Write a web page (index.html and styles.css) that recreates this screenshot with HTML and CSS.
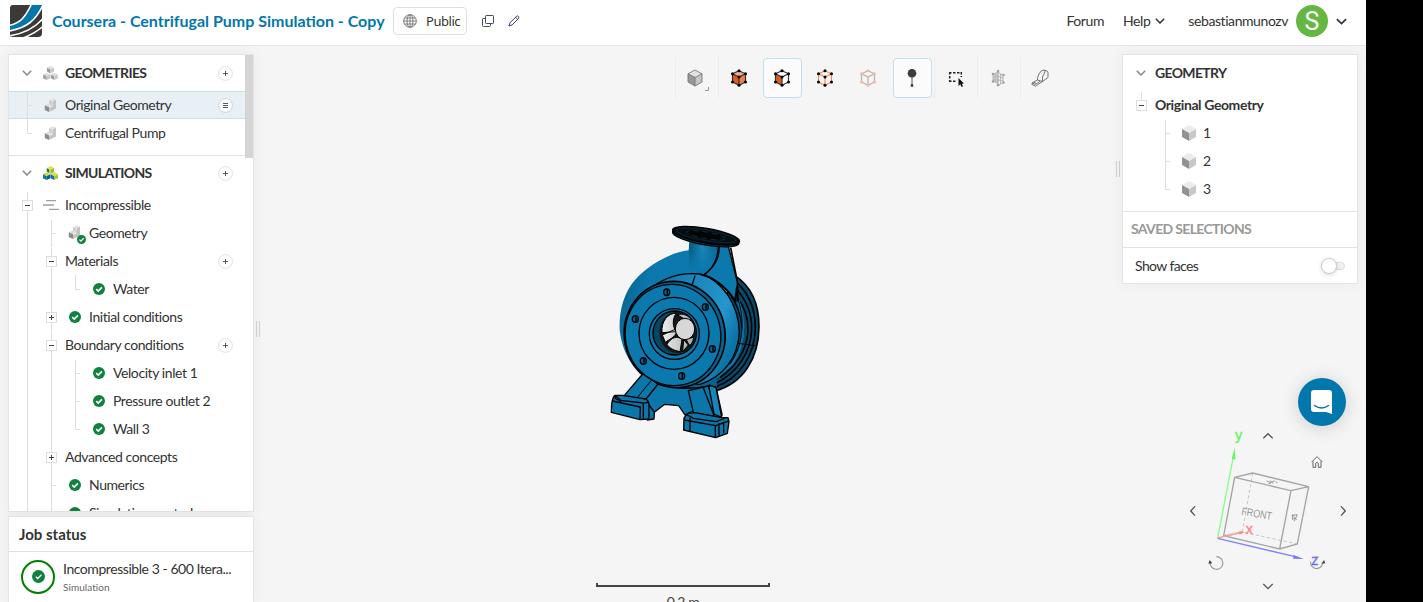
FILE: index.html
```html
<!DOCTYPE html>
<html lang="en">
<head>
<meta charset="utf-8">
<title>Centrifugal Pump Simulation</title>
<link rel="stylesheet" href="styles.css">
</head>
<body>
<svg class="defs" width="0" height="0">
  <defs>
    <symbol id="g-line" viewBox="0 0 24 28"><path d="M12.5 0V28" class="gl"/></symbol>
    <symbol id="g-tee" viewBox="0 0 24 28"><path d="M12.5 0V28M13 14.500H17" class="gl"/></symbol>
    <symbol id="g-end" viewBox="0 0 24 28"><path d="M12.5 0V14.500H17" class="gl"/></symbol>
    <symbol id="g-tee1" viewBox="0 0 24 28"><path d="M12.5 1V28M13 14.500H17" class="gl"/></symbol>
    <symbol id="g-minus" viewBox="0 0 24 28"><path d="M12.500 1V28" class="gl"/><rect x="7.500" y="9.500" width="10" height="10" class="gb"/><path d="M10 14.500H15" class="gs"/></symbol>
    <symbol id="g-minus-end" viewBox="0 0 24 28"><path d="M12.500 1V9" class="gl"/><rect x="7.500" y="9.500" width="10" height="10" class="gb"/><path d="M10 14.500H15" class="gs"/></symbol>
    <symbol id="g-plus" viewBox="0 0 24 28"><path d="M12.500 0V28" class="gl"/><rect x="7.500" y="9.500" width="10" height="10" class="gb"/><path d="M10 14.500H15M12.500 12V17" class="gs"/></symbol>
    <symbol id="chev" viewBox="0 0 10 6"><path d="M.8.8 5 5 9.200.8" fill="none" stroke="currentColor" stroke-width="1.500"/></symbol>
    <symbol id="check" viewBox="0 0 12 12"><circle cx="6" cy="6" r="6" fill="#11813f"/><path d="M3.200 6.200 5.200 8.100 8.900 4.300" fill="none" stroke="#fff" stroke-width="1.700"/></symbol>
    <symbol id="cube" viewBox="0 0 14 16"><path d="M7 0 14 4 7 8 0 4Z" fill="#ebebeb"/><path d="M0 4 7 8V16L0 12Z" fill="#939391"/><path d="M14 4 7 8V16L14 12Z" fill="#c8c8ca"/></symbol>
    <symbol id="part" viewBox="0 0 14 14"><path d="M5 2 8.500 .2 12 1.600 8.500 3.400Z" fill="#e4e4e4"/><path d="M8.500 3.400 12 1.600V10.500L5 14V10L8.500 8.200Z" fill="#c4c4c4"/><path d="M5 2 8.500 3.400V8.200L5 7Z" fill="#cfcfcf"/><path d="M.8 7.200 4.500 5.500 8.500 7.200 5 9.200Z" fill="#dedede"/><path d="M.8 7.200 5 9.200V14L.8 12Z" fill="#8c8c8c"/></symbol>
    <symbol id="cubes-grey" viewBox="0 0 15 14"><path d="M7.500 0 11 1.800 7.500 3.600 4 1.800Z" fill="#dcdcdc"/><path d="M4 1.800 7.500 3.600V7.400L4 5.600Z" fill="#9c9c9c"/><path d="M11 1.800 7.500 3.600V7.400L11 5.600Z" fill="#c8c8c8"/><path d="M3.700 6.800 7.200 8.600 3.700 10.400.2 8.600ZM11.300 6.800 14.800 8.600 11.300 10.400 7.800 8.600Z" fill="#dcdcdc"/><path d="M.2 8.600 3.700 10.400V14L.2 12.200ZM7.800 8.600 11.300 10.400V14L7.800 12.200Z" fill="#9c9c9c"/><path d="M7.200 8.600 3.700 10.400V14L7.200 12.200ZM14.800 8.600 11.300 10.400V14L14.800 12.200Z" fill="#c6c6c6"/></symbol>
    <symbol id="cubes-color" viewBox="0 0 15 14"><path d="M7.500 0 11.200 1.900 7.500 3.800 3.800 1.900Z" fill="#e8e23c"/><path d="M3.800 1.900 7.500 3.800V8L3.800 6Z" fill="#c8cc38"/><path d="M11.200 1.900 7.500 3.800V8L11.200 6Z" fill="#a0bd3c"/><path d="M3.700 6.300 7.400 8.300 3.700 10.200 0 8.300Z" fill="#c9d845"/><path d="M11.300 6.300 15 8.300 11.300 10.200 7.600 8.300Z" fill="#e4dc3c"/><path d="M0 8.300 3.700 10.200V14L0 12.200ZM7.600 8.300 11.300 10.200V14L7.600 12.200ZM3.800 2.200 6 3.500V6.600L3.800 5.600Z" fill="#0a72ad"/><path d="M7.400 8.300 3.700 10.200V14L7.400 12.200Z" fill="#07608e"/><path d="M15 8.300 11.300 10.200V14L15 12.200Z" fill="#a3c43a"/></symbol>
    <symbol id="add" viewBox="0 0 15 15"><circle cx="7.500" cy="7.500" r="6.900" fill="#fff" stroke="#dde2e7"/><path d="M5 7.500H10M7.500 5V10" stroke="#555b60"/></symbol>
    <symbol id="menu" viewBox="0 0 15 15"><circle cx="7.500" cy="7.500" r="6.900" fill="#fff" stroke="#ccd3d9"/><path d="M5 5.500H10M5 7.500H10M5 9.500H10" stroke="#555b60"/></symbol>
    <symbol id="vdots" viewBox="0 0 18 18"><g><circle cx="9" cy="1.700" r="1.500"/><circle cx="2.500" cy="4.800" r="1.500"/><circle cx="15.500" cy="4.800" r="1.500"/><circle cx="9" cy="8" r="1.500"/><circle cx="2.500" cy="13" r="1.500"/><circle cx="15.500" cy="13" r="1.500"/><circle cx="9" cy="16.300" r="1.500"/></g></symbol>
  </defs>
</svg>
<div class="app">
  <header class="topbar">
    <svg class="logo" viewBox="0 0 32 32"><clipPath id="lc"><path d="M3 0H32V28Q32 32 28 32H0V3Q0 0 3 0Z"/></clipPath><g clip-path="url(#lc)"><rect width="32" height="32" fill="#3d3936"/><path d="M-1 21C11 18 15 14 22-1H33V1C27 15 17 23-1 26Z" fill="#0277ab"/><path d="M-1 20.500C10 18 15 13 21.500-1M-1 26C17 23 26 15 33 0M-1 31C15 28.500 25 23 33 13.500M13 33C20 30.500 27 26.500 33 21.500" fill="none" stroke="#fff" stroke-width="1.600"/></g></svg>
    <h1 class="title">Coursera - Centrifugal Pump Simulation - Copy</h1>
    <button class="public"><svg width="14" height="14" viewBox="0 0 14 14" fill="none" stroke="#777"><circle cx="7" cy="7" r="6.300"/><ellipse cx="7" cy="7" rx="3" ry="6.300"/><path d="M7 .7V13.300M.7 7H13.300M1.500 4H12.500M1.500 10H12.500" stroke-width=".9"/></svg><span>Public</span></button>
    <svg class="copy" width="12" height="12" viewBox="0 0 12 12" fill="none" stroke="#444e60"><rect x="3.500" y=".5" width="8" height="8" rx=".7"/><path d="M3 3.500H1.200Q.5 3.500.5 4.200V10.500Q.5 11.500 1.500 11.500H7.500Q8.500 11.500 8.500 10.500V9"/></svg>
    <svg class="edit" width="12" height="12" viewBox="0 0 12 12" fill="none" stroke="#34406a"><path d="M1 11 2 7.800 8.600 1.200Q9.500.5 10.400 1.400T10.700 3.300L4.100 9.900ZM7.500 2.300 9.700 4.400"/></svg>
    <nav class="nav">
      <a class="forum">Forum</a><a class="help">Help</a><svg class="c1" width="10" height="6"><use href="#chev"/></svg>
      <a class="user">sebastianmunozv</a><span class="avatar">S</span><svg class="c2" width="11" height="7"><use href="#chev"/></svg>
    </nav>
  </header>
  <main class="work">
    <aside class="left">
      <section class="panel treepanel">
        <div class="tree">
          <div class="head"><svg class="chv"><use href="#chev"/></svg><svg class="hi"><use href="#cubes-grey"/></svg><b>GEOMETRIES</b><svg class="act"><use href="#add"/></svg></div>
          <div class="row sel"><svg class="g"><use href="#g-tee"/></svg><span class="ic"><svg class="pt"><use href="#part"/></svg></span><span class="tx">Original Geometry</span><svg class="act"><use href="#menu"/></svg></div>
          <div class="row"><svg class="g"><use href="#g-end"/></svg><span class="ic"><svg class="pt"><use href="#part"/></svg></span><span class="tx">Centrifugal Pump</span></div>
          <div class="head second"><svg class="chv"><use href="#chev"/></svg><svg class="hi"><use href="#cubes-color"/></svg><b>SIMULATIONS</b><svg class="act"><use href="#add"/></svg></div>
          <div class="row"><svg class="g"><use href="#g-minus"/></svg><span class="ic"><svg width="16" height="10" viewBox="0 0 16 10"><path d="M3 .7H13M0 5H11M6 9.300H16" stroke="#a0a0a0" stroke-width="1.300"/></svg></span><span class="tx">Incompressible</span></div>
          <div class="row"><svg class="g"><use href="#g-line"/></svg><svg class="g"><use href="#g-tee1"/></svg><span class="ic"><svg class="ptc" viewBox="0 0 19 20"><use href="#part" x="1" y="0" width="14" height="14"/><use href="#check" x="10" y="10" width="9" height="9"/></svg></span><span class="tx">Geometry</span></div>
          <div class="row"><svg class="g"><use href="#g-line"/></svg><svg class="g"><use href="#g-minus"/></svg><span class="tx">Materials</span><svg class="act"><use href="#add"/></svg></div>
          <div class="row"><svg class="g"><use href="#g-line"/></svg><svg class="g"><use href="#g-line"/></svg><svg class="g"><use href="#g-end"/></svg><span class="ic"><svg class="ck"><use href="#check"/></svg></span><span class="tx">Water</span></div>
          <div class="row"><svg class="g"><use href="#g-line"/></svg><svg class="g"><use href="#g-plus"/></svg><span class="ic"><svg class="ck"><use href="#check"/></svg></span><span class="tx">Initial conditions</span></div>
          <div class="row"><svg class="g"><use href="#g-line"/></svg><svg class="g"><use href="#g-minus"/></svg><span class="tx">Boundary conditions</span><svg class="act"><use href="#add"/></svg></div>
          <div class="row"><svg class="g"><use href="#g-line"/></svg><svg class="g"><use href="#g-line"/></svg><svg class="g"><use href="#g-tee1"/></svg><span class="ic"><svg class="ck"><use href="#check"/></svg></span><span class="tx">Velocity inlet 1</span></div>
          <div class="row"><svg class="g"><use href="#g-line"/></svg><svg class="g"><use href="#g-line"/></svg><svg class="g"><use href="#g-tee"/></svg><span class="ic"><svg class="ck"><use href="#check"/></svg></span><span class="tx">Pressure outlet 2</span></div>
          <div class="row"><svg class="g"><use href="#g-line"/></svg><svg class="g"><use href="#g-line"/></svg><svg class="g"><use href="#g-end"/></svg><span class="ic"><svg class="ck"><use href="#check"/></svg></span><span class="tx">Wall 3</span></div>
          <div class="row"><svg class="g"><use href="#g-line"/></svg><svg class="g"><use href="#g-plus"/></svg><span class="tx">Advanced concepts</span></div>
          <div class="row"><svg class="g"><use href="#g-line"/></svg><svg class="g"><use href="#g-tee"/></svg><span class="ic"><svg class="ck"><use href="#check"/></svg></span><span class="tx">Numerics</span></div>
          <div class="row"><svg class="g"><use href="#g-line"/></svg><svg class="g"><use href="#g-tee"/></svg><span class="ic"><svg class="ck"><use href="#check"/></svg></span><span class="tx">Simulation control</span></div>
        </div>
        <div class="scroll"></div>
      </section>
      <section class="panel jobs">
        <h2>Job status</h2>
        <div class="job">
          <svg width="34" height="34" viewBox="0 0 34 34"><circle cx="17" cy="17" r="16" fill="none" stroke="#008000" stroke-width="2"/><circle cx="17.500" cy="16.500" r="6.500" fill="#11813f"/><path d="M14.800 16.800 16.700 18.500 20.400 14.800" fill="none" stroke="#fff" stroke-width="1.300"/></svg>
          <div><p class="jn">Incompressible 3 - 600 Itera...</p><p class="jt">Simulation</p></div>
        </div>
      </section>
    </aside>
    <i class="grip gripl"></i>
    <div class="center">
      <div class="tools">
        <span class="t sep"><svg class="first" width="34" height="28" viewBox="0 0 34 28"><path d="M12 5 19 8.800 12 12.500 5 8.800Z" fill="#e2e2e2"/><path d="M5 8.800 12 12.500V21L5 17Z" fill="#989898"/><path d="M19 8.800 12 12.500V21L19 17Z" fill="#c5c5c5"/><path d="M12 5 19 8.800V17L12 21 5 17V8.800ZM5 8.800 12 12.500 19 8.800M12 12.500V21" fill="none" stroke="#777" stroke-width=".9"/><path d="M25.500 22V25.500H22" fill="none" stroke="#999"/></svg></span>
        <span class="t sep"><svg class="tc lf" viewBox="0 0 18 18"><path d="M9 1.700 15.500 4.800 9 8 2.500 4.800Z" fill="#f0ad8f"/><path d="M2.500 4.800 9 8V16.300L2.500 13Z" fill="#dc5b1e"/><path d="M15.500 4.800 9 8V16.300L15.500 13Z" fill="#ee7f4b"/><path class="ol" stroke="#333" d="M9 1.700 15.500 4.800V13L9 16.300 2.500 13V4.800ZM2.500 4.800 9 8 15.500 4.800M9 8V16.300"/><use href="#vdots"/></svg></span>
        <span class="t"><span class="on"><svg class="tc lf" viewBox="0 0 18 18"><path d="M9 1.700 15.500 4.800V13L9 16.300 2.500 13V4.800Z" fill="#fff"/><path d="M2.500 4.800 9 8V16.300L2.500 13Z" fill="#df5a1c"/><path class="ol" stroke="#333" d="M9 1.700 15.500 4.800V13L9 16.300 2.500 13V4.800ZM2.500 4.800 9 8 15.500 4.800M9 8V16.300"/><use href="#vdots"/></svg></span></span>
        <span class="t"><svg class="tc lf" viewBox="0 0 18 18"><path class="ol" stroke="#ed875c" d="M9 1.700 15.500 4.800V13L9 16.300 2.500 13V4.800ZM2.500 4.800 9 8 15.500 4.800M9 8V16.300"/><use href="#vdots"/></svg></span>
        <span class="t"><svg class="tc lf" viewBox="0 0 18 18" fill="#f4b9a2"><path class="ol" stroke="#b5b0ae" d="M9 1.700 15.500 4.800V13L9 16.300 2.500 13V4.800ZM2.500 4.800 9 8 15.500 4.800M9 8V16.300"/><use href="#vdots"/></svg></span>
        <span class="t"><span class="on"><svg class="tc" viewBox="0 0 18 18"><circle cx="9" cy="4.200" r="4.300" fill="#3c3c3c"/><path d="M9 8V16" stroke="#555"/><circle cx="9" cy="16.500" r="1.400" fill="#444"/></svg></span></span>
        <span class="t sep"><svg class="tc" viewBox="0 0 18 18"><path d="M2 3.700H15M2 12.300H10M2.700 3V13M14.300 3V8" fill="none" stroke="#222" stroke-width="1.500" stroke-dasharray="2.500 1.500"/><path d="M11.500 9V17L13.300 15.300 14.500 18 16 17.300 14.800 14.800 17 14.500Z" fill="#111"/></svg></span>
        <span class="t sep"><svg class="tc lf" viewBox="0 0 18 18" fill="none" stroke="#b4b4b4"><path d="M4 5.500 9 3V14.500L4 12Z" fill="#d4d4d4"/><path d="M9 3 14 6.500V13.500L9 16.500ZM4 8.500 9 7 14 9M4 11 9 11 14 11.500M6.500 4V13M11.500 5V15"/><g fill="#a2a2a2" stroke="none"><circle cx="9" cy="2" r="1.300"/><circle cx="4" cy="5" r="1.300"/><circle cx="14.500" cy="6" r="1.300"/><circle cx="9" cy="16.300" r="1.300"/><circle cx="4" cy="12.500" r="1.300"/><circle cx="14.500" cy="13.500" r="1.300"/></g></svg></span>
        <span class="t sep"><svg class="tc tape" viewBox="0 0 18 18" fill="none" stroke="#666"><path d="M6.500 8.500 8 5Q10 1 13 1L16 2Q17 2.500 17 4V8.500L11.500 12.500 6.500 11ZM13 1Q15 2.500 13 5L11.500 8V12.500M6.500 11 1 14V15.500L4.500 17 11.500 12.500M1 14 4.500 15.300 9 12.300M3 13.200 5 14.500" stroke-width=".9"/></svg></span>
      </div>
      <svg class="pump" width="170" height="230" viewBox="0 0 510 690">
        <defs>
          <linearGradient id="pv" x1="0" y1="0" x2="1" y2=".35"><stop offset="0" stop-color="#085579"/><stop offset=".3" stop-color="#0b79ae"/><stop offset="1" stop-color="#0b79ae"/></linearGradient>
          <linearGradient id="pn" x1="0" x2="1"><stop offset="0" stop-color="#07547a"/><stop offset=".45" stop-color="#1b86ba"/><stop offset="1" stop-color="#075f89"/></linearGradient>
          <linearGradient id="pf" x1="0" x2="0" y1="0" y2="1"><stop offset=".2" stop-color="#fff"/><stop offset="1" stop-color="#000"/></linearGradient>
          <mask id="pm"><rect x="255" y="75" width="110" height="90" fill="url(#pf)"/></mask>
          <linearGradient id="pb" x1="0" x2="1" y1="0" y2=".5"><stop offset="0" stop-color="#0a71a3"/><stop offset=".8" stop-color="#2596cd"/><stop offset="1" stop-color="#0b73a6"/></linearGradient>
          <linearGradient id="pw" x1="0" x2="1"><stop offset="0" stop-color="#eee"/><stop offset="1" stop-color="#aaa"/></linearGradient>
        </defs>
        <g stroke="#000" stroke-width="4" stroke-linejoin="round">
          <path d="M405 182C455 215 477 270 477 335C476 430 430 505 345 528L290 440Z" fill="#064b6b" stroke-width="5"/>
          <path d="M402 195C445 230 466 280 466 340C464 420 420 490 345 516M408 222C440 255 456 295 455 345C452 410 415 470 350 504M411 247C434 275 445 310 444 350C440 405 408 455 360 488" fill="none" stroke-width="5"/>
          <path d="M414 255C440 330 430 400 394 448L350 486" fill="none" stroke="#0b78ac" stroke-width="8"/>
          <path d="M413 250C437 320 428 395 390 447M414 385 466 392" fill="none" stroke-width="3"/>
          <path d="M170 470H350V518L270 530 180 515Z" fill="#07628f" stroke="none"/>
        </g>
        <path d="M268 82 266 106C215 112 150 145 105 195C70 235 57 290 59 345C66 410 98 465 145 492L290 510C370 490 425 410 417 325C410 270 370 210 315 178C345 155 357 130 357 92Z" fill="url(#pv)"/>
        <path d="M268 82 266 165H310C350 150 357 125 357 92Z" fill="url(#pn)" mask="url(#pm)"/>
        <path d="M358 90 385 94 413 205 407 257C380 216 350 193 313 179C350 150 358 125 358 90Z" fill="#0b79ae" stroke="#000" stroke-width="4"/>
        <path d="M130 238C180 190 235 170 300 177C370 195 416 275 418 350C414 430 370 485 300 508L190 500Z" fill="url(#pb)" stroke="#000" stroke-width="4"/>
        <path d="M302 178C370 195 421 260 426 340M285 182 277 208M356 92C352 135 340 160 313 178M410 215 404 260" fill="none" stroke="#000" stroke-width="4"/>
        <path d="M392 98 413 205V260" fill="none" stroke="#000" stroke-width="5"/>
        <ellipse cx="224" cy="359" rx="151" ry="160" fill="#07628f" stroke="#000" stroke-width="5" transform="rotate(-12 224 359)"/>
        <ellipse cx="219" cy="360" rx="143" ry="152" fill="#0b79ad" stroke="#000" stroke-width="4" transform="rotate(-12 219 360)"/>
        <ellipse cx="222" cy="355" rx="105" ry="108" fill="none" stroke="#000" stroke-width="4"/>
        <ellipse cx="223" cy="357" rx="75" ry="76" fill="#0b79ad" stroke="#000" stroke-width="4"/>
        <ellipse cx="224" cy="354" rx="65" ry="66" fill="#064766" stroke="#000" stroke-width="4"/>
        <ellipse cx="232" cy="352" rx="54" ry="62" fill="#171717"/>
        <path d="M186 353C183 318 204 295 229 294 215 315 219 335 228 350ZM187 360 232 340C230 366 212 370 196 382ZM201 388C213 368 232 360 246 374L240 410C221 406 207 399 201 388ZM251 374 265 390 248 410ZM258 372 281 367C280 381 271 392 267 390ZM232 299C248 295 266 300 275 316L250 310Z" fill="url(#pw)" stroke="#000" stroke-width="3"/>
        <ellipse cx="255" cy="342" rx="29" ry="32" fill="#d7d7d7" stroke="#000" stroke-width="3"/>
        <g fill="#07628f" stroke="#000" stroke-width="4"><ellipse cx="200" cy="232" rx="9" ry="10"/><ellipse cx="316" cy="276" rx="9" ry="10"/><ellipse cx="106" cy="312" rx="9" ry="10"/><ellipse cx="337" cy="402" rx="9" ry="10"/><ellipse cx="130" cy="438" rx="9" ry="10"/><ellipse cx="245" cy="483" rx="9" ry="10"/></g>
        <path d="M202 223V241M318 268V284M108 303V321M339 393V411M132 429V447M247 474V492" stroke="#000" stroke-width="4"/>
        <g fill="#0b76a9" stroke="#000" stroke-width="4" stroke-linejoin="round">
          <path d="M174 507C210 520 260 524 320 514L338 560 255 600 236 572 194 568 163 592 162 612 142 615 138 550Z"/>
          <path d="M128 477 70 545 130 562 174 507Z"/><path d="M155 495 110 550" fill="none" stroke-width="3"/>
          <path d="M45 541 68 541 137 552Q146 556 147 568V612L120 614 34 592 35 568Q38 546 45 541Z"/>
          <path d="M45 543Q43 554 62 556L130 564 145 562M37 558 121 576 120 613M48 544 62 556 60 563M130 564V611M147 570 164 592" fill="none"/>
          <path d="M265 527 280 592 360 608 325 513Z"/><path d="M310 518 343 604M327 510 348 517 367 602" fill="none" stroke-width="4"/>
          <path d="M348 517 326 511 342 597 365 607Z" fill="#1486bc"/>
          <path d="M263 595 284 593 365 608 384 608 387 620 382 655 347 668 251 645 252 609Z"/>
          <path d="M253 615 347 632 386 618M346 632V667M261 599 280 610 348 620 376 609M270 608V648M357 624V662M371 620V655" fill="none"/>
        </g>
        <g transform="rotate(10 318 63)" stroke="#000">
          <ellipse cx="318" cy="68" rx="101" ry="22" fill="#063c56" stroke-width="4"/>
          <ellipse cx="318" cy="62" rx="102" ry="22" fill="#080d11" stroke-width="4"/>
          <ellipse cx="318" cy="61" rx="90" ry="16" fill="none" stroke="#052839" stroke-width="3"/>
          <ellipse cx="318" cy="61" rx="58" ry="10" fill="#020506" stroke="#06405c" stroke-width="2" stroke-dasharray="16 12"/>
        </g>
      </svg>
      <div class="scale"><div class="bar"></div><span>0.2 m</span></div>
    </div>
    <i class="grip gripr"></i>
    <aside class="right">
      <section class="panel geo">
        <div class="head"><svg class="chv"><use href="#chev"/></svg><b class="nb">GEOMETRY</b></div>
        <div class="row"><svg class="g"><use href="#g-minus-end"/></svg><b class="tx nb">Original Geometry</b></div>
        <div class="row kid"><svg class="g"><use href="#g-tee1"/></svg><svg class="cb"><use href="#cube"/></svg><span>1</span></div>
        <div class="row kid"><svg class="g"><use href="#g-tee"/></svg><svg class="cb"><use href="#cube"/></svg><span>2</span></div>
        <div class="row kid"><svg class="g"><use href="#g-end"/></svg><svg class="cb"><use href="#cube"/></svg><span>3</span></div>
        <div class="saved">SAVED SELECTIONS</div>
        <div class="faces"><span>Show faces</span><span class="toggle"><i class="knob"></i></span></div>
      </section>
    </aside>
    <svg class="orient" width="190" height="182" viewBox="0 150 570 546" fill="none">
      <g stroke="#555" stroke-width="4"><path d="M250 205 264 191 278 205M250 642 264 656 278 642M45 409 32 423 45 437M483 409 496 423 483 437"/></g>
      <path d="M395 276 411 260 427 276M399 274V292H407V280Q411 274 415 280V292H423V274" stroke="#666" stroke-width="3"/>
      <path d="M218 309 187 486 352 522M131 498 187 486" stroke="#c6c6c6" stroke-width="3" stroke-dasharray="10 7"/>
      <path d="M131 497 187 486" stroke="#aaa" stroke-width="6" stroke-dasharray="2 3"/>
      <path d="M164 322 333 362 299 537 131 497ZM164 322 218 309 386 350 333 362M386 350 352 522 299 537" stroke="#a4a4a4" stroke-width="4"/>
      <path d="M113 504 162 250" stroke="#86ff86" stroke-width="4"/><path d="M165 232 155 267 166 269Z" fill="#66f566"/>
      <path d="M113 504 185 488" stroke="#ff9c9c" stroke-width="4"/><path d="M193 486 177 484 179 494Z" fill="#ff8585"/>
      <path d="M113 505 345 560" stroke="#8080ff" stroke-width="4"/><path d="M371 567 339 566 341 555Z" fill="#7777ff"/>
      <g class="axes"><text x="165" y="210" fill="#5cf45c" stroke="#5cf45c">y</text><text x="197" y="491" fill="#ff8585" stroke="#ff8585">x</text><text x="394" y="586" fill="#6b6bf8" stroke="#6b6bf8">z</text></g>
      <text class="front" textLength="92" lengthAdjust="spacingAndGlyphs" transform="matrix(.985 .17 -.17 .985 183 434)">FRONT</text>
      <path d="M260 333 272 338 284 332M266 340H273M287 335 293 338M270 332 280 340M335 437 352 434 342 454M339 432 337 448 349 444M340 440 350 449" stroke="#999" stroke-width="3"/>
      <path d="M91 575A19 19 0 1 0 109 560M392 575A18 18 0 1 0 428 580M405 561H417" stroke="#999" stroke-width="3.500"/>
      <path d="M85 581 89 570 97 580ZM424 581 432 570 436 580Z" fill="#444"/>
    </svg>
    <button class="chat"><svg width="24" height="26" viewBox="0 0 24 26"><path d="M4 1H19Q22 1 22 4V25L16 23H4Q1 23 1 20V4Q1 1 4 1Z" fill="#fff"/><path d="M4.500 16.500Q11.500 21.500 18.500 16.500" fill="none" stroke="#0277ab" stroke-width="1.400" stroke-linecap="round"/></svg></button>
  </main>
</div>
</body>
</html>
```

FILE: styles.css
```css
* { box-sizing: border-box; }
body { margin: 0; background: #000; overflow: hidden; font: 14px/20px Lato, sans-serif; letter-spacing: -.42px; color: #333; }
h1, h2, p { margin: 0; }
button { font: inherit; color: inherit; padding: 0; border: 0; }
svg { display: block; flex: none; }
.defs { position: absolute; }
.app { width: 1366px; height: 602px; background: #f5f5f5; display: flex; flex-direction: column; overflow: hidden; }
.topbar { height: 46px; flex: none; background: #fff; border-bottom: 1px solid #e2e2e2; display: flex; align-items: center; padding: 0 19px 3px 10px; }
.logo { width: 32px; height: 32px; }
.title { margin-left: 10px; width: 333px; font-size: 16px; line-height: 22px; font-weight: 700; letter-spacing: 0; color: #0277ab; white-space: nowrap; }
.public { margin-left: 8px; width: 74px; height: 28px; border: 1px solid #dfdfdf; border-radius: 4px; background: #fff; display: flex; align-items: center; gap: 9px; padding-left: 9px; font: 13px "Noto Sans", sans-serif; letter-spacing: -.45px; }
.copy { margin-left: 15px; }
.edit { margin-left: 14px; }
.nav { margin-left: auto; display: flex; align-items: center; }
.help { margin-left: 19px; }
.c1 { margin-left: 5px; }
.user { margin-left: 23px; }
.avatar { margin-left: 8px; width: 32px; height: 32px; border-radius: 50%; background: #64b842; color: #fff; font: 25px/33px Roboto, sans-serif; letter-spacing: 0; text-align: center; }
.c2 { margin-left: 8px; }

.work { position: relative; flex: 1; min-height: 0; display: flex; padding: 8px 8px 0; }
.left { width: 246px; display: flex; flex-direction: column; gap: 4px; }
.panel { background: #fff; border: 1px solid #e4e4e4; box-shadow: 0 0 14px rgba(0, 0, 0, .05); }
.treepanel { height: 458px; display: flex; overflow: hidden; flex: none; }
.tree { width: 236px; flex: none; }
.scroll { width: 8px; height: 103px; background: #d5d5d5; }
.head { height: 36px; display: flex; align-items: center; padding-left: 13px; }
.head b, .nb { font-weight: 700; }
.head b { letter-spacing: -.65px; }
.chv { width: 10px; height: 6px; color: #888; }
.hi { width: 15px; height: 14px; margin: 0 7px 0 11px; }
.second { border-top: 1px solid #e2e2e2; margin-top: 8px; height: 36px; padding-bottom: 2px; }
.row { height: 28px; display: flex; align-items: center; padding-left: 6px; white-space: nowrap; }
.sel { background: #e8f0f5; box-shadow: inset 0 1px #c9e0e8, inset 0 -1px #c9e0e8; }
.g { width: 24px; height: 28px; }
.gl { fill: none; stroke: #dcdfe1; shape-rendering: crispEdges; }
.gb { fill: #fff; stroke: #dedede; shape-rendering: crispEdges; }
.gs { stroke: #444; shape-rendering: crispEdges; }
.ic { width: 24px; flex: none; display: flex; justify-content: center; }
.pt { width: 14px; height: 14px; }
.ptc { width: 19px; height: 20px; margin: 4px 0 0 3px; }
.ck { width: 12px; height: 12px; }
.tx { margin-left: 2px; }
.act { width: 15px; height: 15px; margin: 1px 12px 0 auto; }
.jobs { flex: 1; border-bottom: 0; }
.jobs h2 { height: 35px; padding: 0 10px; font-size: 15px; letter-spacing: 0; line-height: 35px; border-bottom: 1px solid #e2e2e2; }
.job { display: flex; padding: 8px 0 0 12px; gap: 8px; }
.jn { line-height: 20px; margin-top: -1px; letter-spacing: -.44px; }
.jt { font-size: 10px; letter-spacing: .05px; line-height: 16px; color: #666; }
.grip { width: 4px; height: 16px; border: solid #cfcfcf; border-width: 0 1px; flex: none; }
.gripl { margin: 267px 0 0 2px; }
.gripr { margin: 107px 2px 0 0; }

.center { flex: 1; min-width: 0; position: relative; display: flex; flex-direction: column; padding: 3px 0 0 415px; }
.tools { display: grid; grid-template-columns: 43px 43px 43px 43px 43px 44px 43px 43px 44px; height: 41px; }
.t { display: flex; align-items: center; justify-content: center; }
.sep { border-left: 1px solid #ececec; }
.tc { width: 18px; height: 18px; }
.lf { margin-right: 2px; }
.tape { margin-right: 5px; }
.ol { fill: none; stroke-width: 1.200; }
.on { width: 39px; height: 40px; border: 1px solid #bfe0ee; border-radius: 4px; background: #fbfbfb; display: flex; align-items: center; justify-content: center; }
.first { margin: 3px 0 0 5px; }
.pump { position: absolute; left: 340px; top: 161px; }
.scale { margin: auto 0 -10px -79px; width: 174px; text-align: center; line-height: 20px; color: #444; letter-spacing: -.4px; }
.bar { height: 4px; border: solid #444; border-width: 0 2px 2px; margin-bottom: 5px; }

.right { width: 236px; }
.geo { height: 230px; }
.geo .head b { margin-left: 9px; }
.geo .tx { letter-spacing: -.4px; }
.kid { padding-left: 30px; }
.cb { width: 14px; height: 16px; margin: 0 7px 0 5px; }
.saved { margin-top: 8px; height: 37px; border: solid #e2e2e2; border-width: 1px 0; padding-left: 8px; font-weight: 700; letter-spacing: -.66px; line-height: 34px; color: #999; }
.faces { height: 35px; display: flex; align-items: center; justify-content: space-between; padding: 0 12px; letter-spacing: -.6px; }
.toggle { width: 24px; height: 8px; border: 1px solid #ddd; border-radius: 4px; background: #f1f1f1; display: flex; align-items: center; }
.knob { width: 16px; height: 16px; flex: none; margin-left: -1px; border: 1px solid #ccc; border-radius: 50%; background: #fff; box-shadow: 0 1px 4px rgba(0, 0, 0, .15); }
.orient { position: absolute; left: 1180px; top: 374px; letter-spacing: 0; }
.axes { font: 43px "Liberation Sans", sans-serif; }
.front { font: 33px "Liberation Sans", sans-serif; fill: #999; }
.chat { position: absolute; left: 1298px; top: 332px; width: 48px; height: 48px; border-radius: 50%; background: #0277ab; box-shadow: 0 2px 18px rgba(0, 0, 0, .16); display: flex; align-items: center; justify-content: center; }
```
